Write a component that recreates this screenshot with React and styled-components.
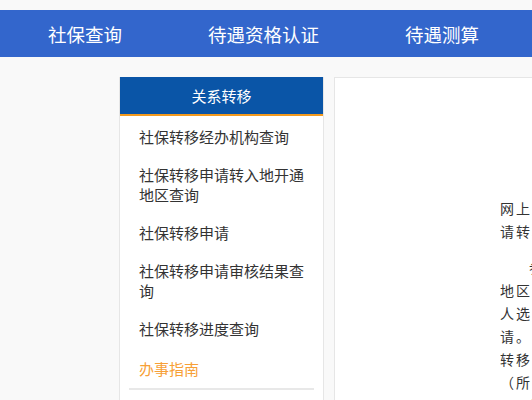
import { createGlobalStyle, styled } from "styled-components";

const GlobalStyle = createGlobalStyle`
  html, body {
    margin: 0;
    padding: 0;
    background: #f9f9f9;
    overflow: hidden;
  }
  body {
    font-family: "Noto Sans CJK SC", "Noto Sans", sans-serif;
  }
`;

const Page = styled.div`
  padding-top: 10px;
  width: 532px;
  height: 400px;
  overflow: hidden;
`;

const NavBar = styled.nav`
  display: flex;
  align-items: center;
  gap: 86px;
  height: 47px;
  padding-left: 48px;
  background: #3366cc;
`;

const NavItem = styled.a`
  color: #fff;
  font-size: 18.5px;
  line-height: 24px;
  white-space: nowrap;
  text-decoration: none;
`;

const Main = styled.div`
  display: flex;
  align-items: flex-start;
  gap: 10px;
  margin-top: 20px;
  padding-left: 119px;
`;

const Sidebar = styled.aside`
  flex: none;
  width: 203px;
  background: #fff;
  border: 1px solid #e6e6e6;
  border-bottom: none;
  height: 400px;
`;

const SideHeader = styled.div`
  height: 37px;
  margin-top: -1px;
  background: #0a55a7;
  border-bottom: 2px solid #f39a1e;
  color: #fff;
  font-size: 15px;
  line-height: 37px;
  text-align: center;
`;

const SideList = styled.ul`
  list-style: none;
  margin: 0;
  padding: 2px 9px 0;
`;

const SideItem = styled.li`
  padding: 9px 0 9px 10px;
  margin-top: ${(p) => (p.$active ? "2px" : "0")};
  font-size: 15px;
  line-height: 20px;
  color: ${(p) => (p.$active ? "#f7a037" : "#333")};
`;

const Divider = styled.div`
  margin: 0 9px;
  border-top: 2px solid #e8e8e8;
`;

const Content = styled.section`
  flex: none;
  width: 860px;
  height: 400px;
  background: #fff;
  border: 1px solid #e6e6e6;
  border-bottom: none;
  box-sizing: border-box;
  padding: 96px 40px 0 165px;
`;

const Para = styled.p`
  margin: 0 0 ${(p) => (p.$first ? "13px" : "0")};
  font-size: 14px;
  line-height: 23px;
  letter-spacing: 2px;
  color: #333;
  text-indent: 29px;
  white-space: nowrap;
`;

const Label = styled.span`
  color: #c0721e;
  font-weight: 700;
`;

function App() {
  return (
    <Page>
      <GlobalStyle />
      <NavBar>
        <NavItem>社保查询</NavItem>
        <NavItem>待遇资格认证</NavItem>
        <NavItem>待遇测算</NavItem>
      </NavBar>

      <Main>
        <Sidebar>
          <SideHeader>关系转移</SideHeader>
          <SideList>
            <SideItem>社保转移经办机构查询</SideItem>
            <SideItem>社保转移申请转入地开通地区查询</SideItem>
            <SideItem>社保转移申请</SideItem>
            <SideItem>社保转移申请审核结果查询</SideItem>
            <SideItem>社保转移进度查询</SideItem>
            <SideItem $active>办事指南</SideItem>
          </SideList>
          <Divider />
        </Sidebar>

        <Content>
          <Para $first>
            <Label>【转移申请】</Label>参保人员可通过国家社会保险公共服务平台
            <br />
            网上办理养老保险关系转移接续业务，按照页面提示填写信息后提交申
            <br />
            请转移。
          </Para>
          <Para>
            参保人员在转入地参保缴费后，可查询转入地是否已开通网上申请，已开通
            <br />
            地区可直接在线提交申请；未开通地区请前往转入地经办机构办理，个
            <br />
            人选择转入地经办机构后，系统将自动匹配相应的转出地并完成转移申
            <br />
            请。申请提交后，可在“社保转移进度查询”中查看办理进度，
            <br />
            转移审核通过后，转入地经办机构将依规办理关系接续手续
            <br />
            （所需材料以当地经办机构要求为准）。
          </Para>
          <Para>
            如有疑问，请咨询当地社会保险经办机构。
          </Para>
        </Content>
      </Main>
    </Page>
  );
}

export default App;
